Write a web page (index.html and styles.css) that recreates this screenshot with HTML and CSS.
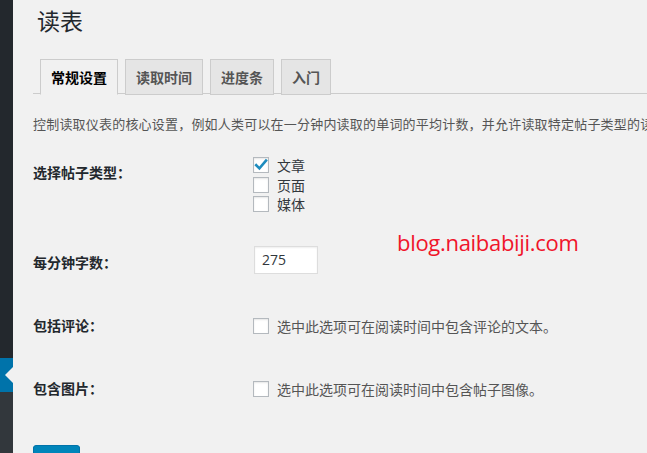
FILE: index.html
```html
<!DOCTYPE html>
<html lang="zh-CN">
<head>
<meta charset="utf-8">
<title>读表</title>
<link rel="stylesheet" href="styles.css">
</head>
<body>
<div class="layout">
  <aside class="sidebar">
    <div class="menu-top"></div>
    <div class="menu-current"><span class="arrow"></span></div>
    <div class="menu-rest"></div>
  </aside>
  <main class="content">
    <h1 class="title">读表</h1>
    <nav class="tabs">
      <a class="tab active">常规设置</a>
      <a class="tab">读取时间</a>
      <a class="tab">进度条</a>
      <a class="tab">入门</a>
    </nav>
    <p class="desc">控制读取仪表的核心设置，例如人类可以在一分钟内读取的单词的平均计数，并允许读取特定帖子类型的读取时间。</p>
    <div class="form">
      <div class="row row-types">
        <div class="th">选择帖子类型：</div>
        <div class="td">
          <div class="options">
            <label class="option"><span class="cb checked"><svg viewBox="0 0 16 16" width="16" height="16"><path d="M3.2 8.2 L6.4 11.4 L13 3.6" fill="none" stroke="#1e8cbe" stroke-width="2.6" stroke-linecap="square" stroke-linejoin="miter"/></svg></span><span class="opt-text">文章</span></label>
            <label class="option"><span class="cb"></span><span class="opt-text">页面</span></label>
            <label class="option"><span class="cb"></span><span class="opt-text">媒体</span></label>
          </div>
        </div>
      </div>
      <div class="row row-words">
        <div class="th">每分钟字数：</div>
        <div class="td"><div class="input">275</div></div>
      </div>
      <div class="row row-check">
        <div class="th">包括评论：</div>
        <div class="td"><label class="option"><span class="cb"></span><span class="hint">选中此选项可在阅读时间中包含评论的文本。</span></label></div>
      </div>
      <div class="row row-check">
        <div class="th">包含图片：</div>
        <div class="td"><label class="option"><span class="cb"></span><span class="hint">选中此选项可在阅读时间中包含帖子图像。</span></label></div>
      </div>
    </div>
    <button class="btn" aria-label="保存"></button>
  </main>
  <div class="watermark">blog.naibabiji.com</div>
</div>
</body>
</html>
```
FILE: styles.css
```css
html, body {
  margin: 0;
  padding: 0;
  height: 100%;
  overflow: hidden;
}
body {
  background: #f1f1f1;
  font-family: "Noto Sans", "Noto Sans CJK SC", sans-serif;
  color: #444;
}
.layout {
  display: flex;
  height: 453px;
  position: relative;
}
.sidebar {
  width: 13px;
  flex: 0 0 13px;
  display: flex;
  flex-direction: column;
}
.menu-top {
  height: 358px;
  background: #23282d;
}
.menu-current {
  height: 34px;
  background: #0073aa;
  display: flex;
  align-items: center;
  justify-content: flex-end;
}
.arrow {
  width: 0;
  height: 0;
  border-top: 8px solid transparent;
  border-bottom: 8px solid transparent;
  border-right: 8px solid #f1f1f1;
}
.menu-rest {
  flex: 1;
  background: #32373c;
}
.content {
  flex: 1;
  padding-left: 20px;
  min-width: 0;
  white-space: nowrap;
}
.title {
  margin: 0;
  padding: 5px 0 0 4px;
  font-family: "Noto Sans CJK SC", sans-serif;
  font-size: 23px;
  line-height: 30px;
  font-weight: 400;
  color: #23282d;
}
.tabs {
  margin-top: 24px;
  display: flex;
  border-bottom: 1px solid #ccc;
  height: 34px;
}
.tab {
  margin-left: 7px;
  padding: 5px 10px;
  border: 1px solid #ccc;
  background: #e5e5e5;
  font-family: "Noto Sans CJK SC", sans-serif;
  font-size: 14px;
  line-height: 24px;
  font-weight: 700;
  color: #555;
  height: 24px;
}
.tab.active {
  background: #f1f1f1;
  border-bottom-color: #f1f1f1;
  color: #000;
}
.desc {
  margin: 21px 0 0;
  font-family: "Noto Sans CJK SC", sans-serif;
  font-size: 13px;
  line-height: 18px;
  color: #555;
  letter-spacing: 0.2px;
}
.form {
  margin-top: 10px;
  display: flex;
  flex-direction: column;
}
.row {
  display: flex;
  align-items: flex-start;
}
.row-types { height: 90px; }
.row-words { height: 63px; }
.row-check { height: 63px; }
.th {
  width: 220px;
  flex: 0 0 220px;
  padding-top: 20px;
  font-family: "Noto Sans CJK SC", sans-serif;
  font-size: 14px;
  line-height: 18px;
  font-weight: 700;
  color: #23282d;
}
.row-types .td { padding-top: 14px; }
.row-words .td { padding-top: 13px; }
.row-check .td { padding-top: 22px; }
.options {
  display: flex;
  flex-direction: column;
  gap: 3.5px;
}
.option {
  display: flex;
  align-items: center;
  height: 16px;
}
.cb {
  box-sizing: border-box;
  width: 16px;
  height: 16px;
  border: 1px solid #b4b9be;
  background: #fff;
  box-shadow: inset 0 1px 2px rgba(0, 0, 0, 0.1);
  margin-right: 8px;
  position: relative;
  flex: 0 0 16px;
}
.cb svg {
  position: absolute;
  left: -1px;
  top: -1px;
}
.opt-text {
  font-family: "Noto Sans CJK SC", sans-serif;
  font-size: 14px;
  line-height: 16px;
  color: #32373c;
}
.hint {
  font-family: "Noto Sans CJK SC", sans-serif;
  font-size: 14px;
  line-height: 16px;
  color: #555;
}
.input {
  box-sizing: border-box;
  margin-left: 1px;
  width: 64px;
  height: 28px;
  border: 1px solid #ddd;
  background: #fff;
  box-shadow: inset 0 1px 2px rgba(0, 0, 0, 0.07);
  padding: 0 7px;
  font-family: "Open Sans", "Noto Sans", sans-serif;
  font-size: 14px;
  line-height: 26px;
  color: #32373c;
}
.btn {
  margin-top: 23px;
  display: block;
  width: 47px;
  height: 30px;
  padding: 0;
  border: 1px solid #0073aa;
  border-radius: 3px;
  background: #0085ba;
  box-shadow: 0 1px 0 #006799;
}
.watermark {
  position: absolute;
  left: 397px;
  top: 226px;
  font-family: "Open Sans", sans-serif;
  font-size: 22px;
  letter-spacing: -0.3px;
  line-height: 32px;
  color: #f0142a;
  white-space: nowrap;
}
```
